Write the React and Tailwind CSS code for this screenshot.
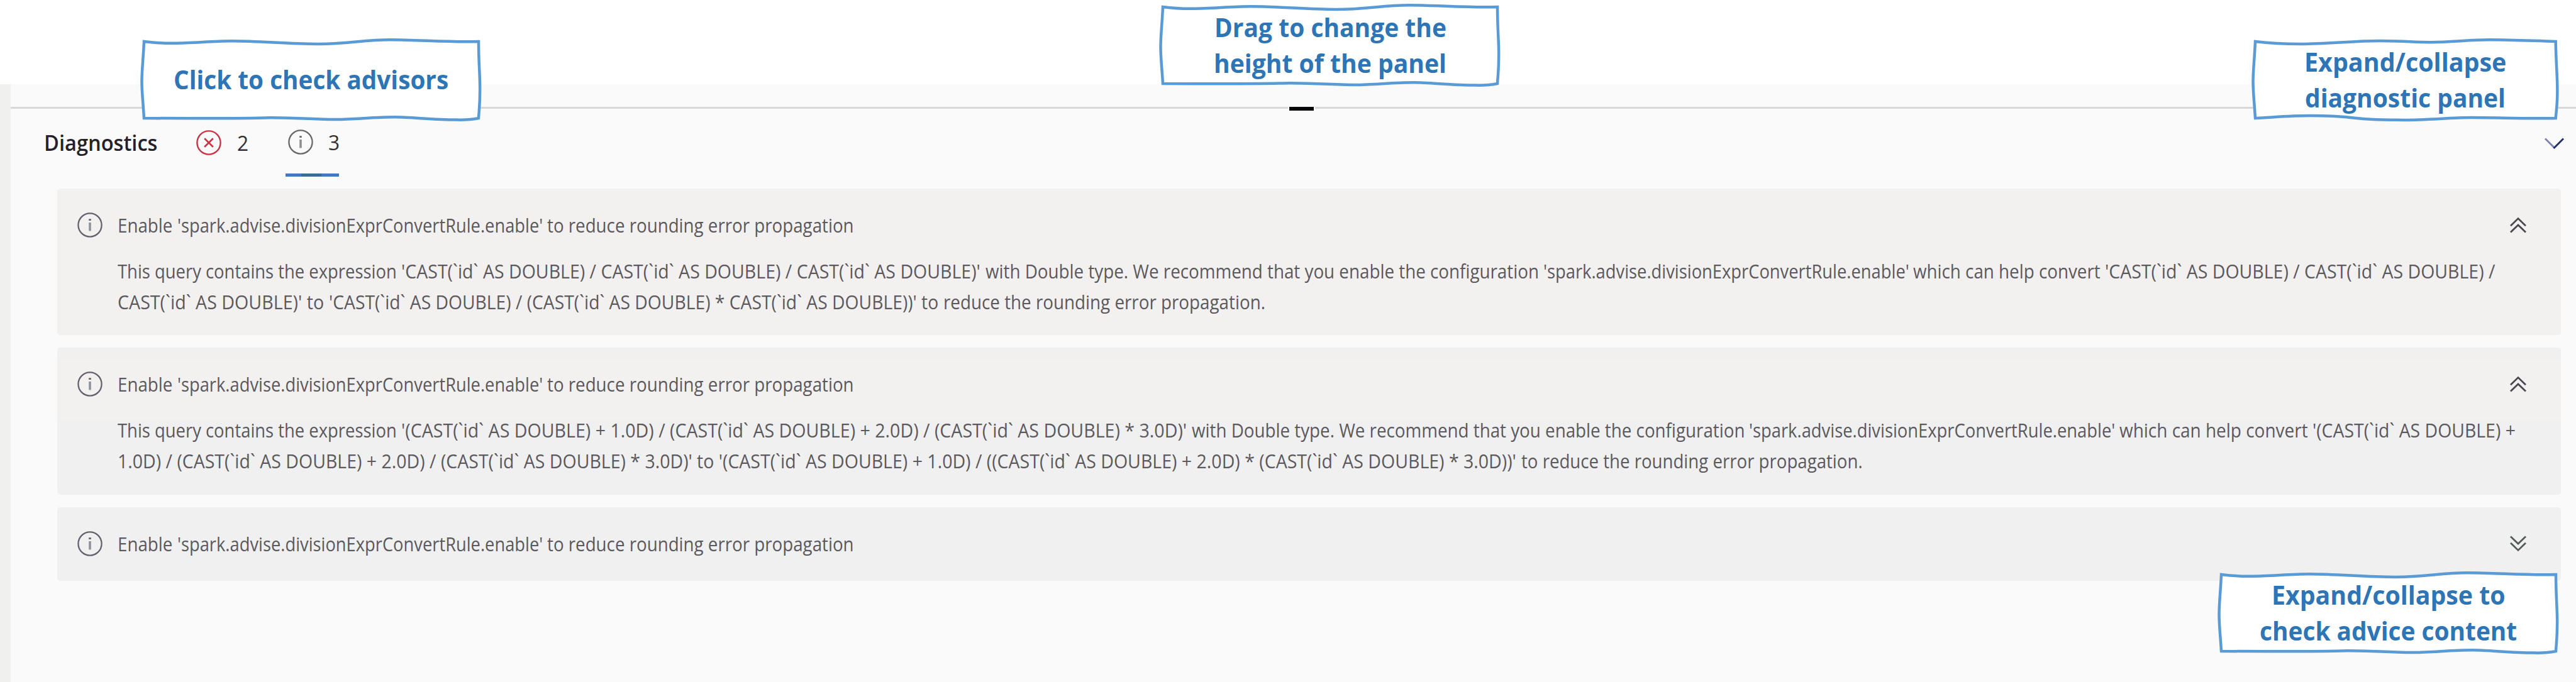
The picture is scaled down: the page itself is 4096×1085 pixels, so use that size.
import { useLayoutEffect, useRef, useState } from "react";

function FitText({ width, children, className = "" }) {
  const ref = useRef(null);
  const [ratio, setRatio] = useState(1);
  useLayoutEffect(() => {
    setRatio(width / ref.current.offsetWidth);
  }, [width, children]);
  return (
    <span className="block shrink-0 overflow-visible whitespace-nowrap" style={{ width }}>
      <span
        ref={ref}
        className={"inline-block origin-left whitespace-pre align-top " + className}
        style={{ transform: `scaleX(${ratio})` }}
      >
        {children}
      </span>
    </span>
  );
}

function TextLine({ runs }) {
  return (
    <p className="flex">
      {runs.map(([width, text]) => (
        <FitText key={text} width={width}>
          {text}
        </FitText>
      ))}
    </p>
  );
}

function InfoIcon({ color = "#685f6e", stem = "#8d939b" }) {
  return (
    <svg className="size-[40px] shrink-0" viewBox="0 0 40 40" fill="none">
      <circle cx="20" cy="20" r="18.6" stroke={color} strokeWidth="2.3" />
      <rect x="18.2" y="10.2" width="3.6" height="2.8" fill={color} />
      <rect x="18.2" y="16" width="3.6" height="13.4" fill={stem} />
    </svg>
  );
}

function ErrorIcon() {
  return (
    <svg className="size-[40px] shrink-0" viewBox="0 0 40 40" fill="none" stroke="#c63446">
      <circle cx="20" cy="20" r="18.6" strokeWidth="2.4" />
      <path d="M13.2 13.2 26.8 26.8M26.8 13.2 13.2 26.8" strokeWidth="2.7" />
    </svg>
  );
}

function DoubleChevron({ open }) {
  return (
    <svg
      className={open ? "h-[26px] w-[28px]" : "h-[26px] w-[28px] rotate-180"}
      viewBox="0 0 28 26"
      fill="none"
      stroke={open ? "#4b4650" : "#535b59"}
      strokeWidth="2.8"
    >
      <path d="M2 14.2 14 2.6 26 14.2M2 24.6 14 13 26 24.6" />
    </svg>
  );
}

const TITLE = [
  [94.5, "Enable "],
  [588, "'spark.advise.divisionExprConvertRule.enable' "],
  [488, "to reduce rounding error propagation"],
];

function Advice({ open, lines = [], className }) {
  return (
    <section className={"rounded-[5px] pt-[38px] pl-[32px] font-['Open_Sans',sans-serif] text-[30.5px] text-[#5b595d] " + className}>
      <div className="flex h-[40px] items-center pr-[54px]">
        <InfoIcon />
        <div className="ml-[24px] grow leading-[40px]">
          <TextLine runs={TITLE} />
        </div>
        <DoubleChevron open={open} />
      </div>
      {open && (
        <div className="mt-[29px] ml-[64px] leading-[48.7px]">
          {lines.map((runs, i) => (
            <TextLine key={i} runs={runs} />
          ))}
        </div>
      )}
    </section>
  );
}

const WAVE =
  "M0 0C16 2 32 3 47 2.8C78 2.8 108 -.7 140 -.7C185 -.7 228 4 275 4C322 4 350 -2.8 391 -2.8C440 -2.8 480 1.5 532 0C532 40 535 60 534 84C534 100 532.5 112 532 122C520 124.5 508 125 496 124.6C460 124.6 425 120.3 399 120.3C365 120.3 335 124 306 124C270 124 235 121 200 121.2C150 122.8 110 122.6 0 122C-2 90 -3.5 80 -3.5 64C-3.5 45 -1 25 0 0Z";
const WAVE_NARROW =
  "M0 0C24 3 48 4 73 4C115 4 155 -.9 198 -.9C235 -.9 255 1.4 280 1.2C312 1.2 340 -2.7 372 -2.7C410 -2.7 440 -1 477.7 0C478.3 40 481 60 480.3 84C480.3 100 478.5 112 477.7 122C440 123.2 385 121.1 344 121.1C310 121.1 275 124.9 237 124.9C195 124.9 175 124 151 121C135 119 110 118 87 118C55 118 30 120.5 0 122C-2 90 -3.5 80 -3.5 64C-3.5 45 -1 25 0 0Z";

function Callout({ className, lines, width = 532, path = WAVE }) {
  return (
    <div className={"absolute flex h-[122px] flex-col items-center justify-center " + className}>
      <svg className="absolute inset-0 size-full overflow-visible" viewBox={`0 0 ${width} 122`} preserveAspectRatio="none">
        <path d={path} fill="#fff" stroke="#5b9bd5" strokeWidth="4.5" />
      </svg>
      <div className="relative flex flex-col items-center font-['Open_Sans',sans-serif] text-[41.3px] leading-[57.1px] font-bold text-[#2e75b6]">
        {lines.map((line) => (
          <FitText key={line.text} width={line.width}>
            {line.text}
          </FitText>
        ))}
      </div>
    </div>
  );
}

export default function App() {
  return (
    <div className="relative flex h-[1085px] w-[4096px] flex-col overflow-hidden bg-white">
      <div className="h-[134px] shrink-0" />
      <div className="flex grow">
        <div className="w-[17px] shrink-0 bg-[#f0f0ee]" />
        <main className="grow bg-[#fafafa] pt-[36px]">
          <div className="relative h-[3px] bg-[#d6d7d7]">
            <div className="absolute top-0 left-[2031px] h-[6px] w-[43px] bg-[#fafafa] px-[2px]">
              <div className="h-full bg-[#08070c]" />
            </div>
          </div>

          <div className="flex h-[108px] pl-[52.5px] font-['Open_Sans',sans-serif] text-[33.5px] leading-[40px] text-[#323130]">
            <h2 className="flex items-center pb-px font-semibold text-[#25212b]">
              <FitText width={180}>Diagnostics</FitText>
            </h2>
            <div className="ml-[62px] flex items-center gap-[25px] pb-px">
              <ErrorIcon />
              <FitText width={18}>2</FitText>
            </div>
            <div className="ml-[59px] flex w-[85px] flex-col">
              <div className="flex grow items-center gap-[24px] pt-[4px] pl-[4px]">
                <InfoIcon color="#66686a" stem="#8f8f8f" />
                <FitText width={18}>3</FitText>
              </div>
              <div className="flex h-[5.5px] justify-center bg-[#4178be]">
                <div className="ml-[-2px] w-[32px] bg-[#356d98]" />
              </div>
            </div>
            <div className="flex grow items-center justify-end pt-px pr-[18px]">
              <svg className="h-[20px] w-[33px]" viewBox="0 0 33 20" fill="none" strokeWidth="2.8">
                <path d="M2 2.5 16.5 17" stroke="#7b80b6" />
                <path d="M15.5 18 31 2.5" stroke="#1f2f66" />
              </svg>
            </div>
          </div>

          <div className="flex flex-col gap-[20px] pt-[19px] pr-[24px] pl-[74px]">
            <Advice
              open
              className="h-[233.3px] bg-[#f2f1f0]"
              lines={[
                [
                  [451, "This query contains the expression "],
                  [928.5, "'CAST(`id` AS DOUBLE) / CAST(`id` AS DOUBLE) / CAST(`id` AS DOUBLE)' "],
                  [887, "with Double type. We recommend that you enable the configuration "],
                  [588.5, "'spark.advise.divisionExprConvertRule.enable' "],
                  [305, "which can help convert "],
                  [620, "'CAST(`id` AS DOUBLE) / CAST(`id` AS DOUBLE) /"],
                ],
                [
                  [336, "CAST(`id` AS DOUBLE)' to "],
                  [977, "'CAST(`id` AS DOUBLE) / (CAST(`id` AS DOUBLE) * CAST(`id` AS DOUBLE))' to "],
                  [512, "reduce the rounding error propagation."],
                ],
              ]}
            />
            <Advice
              open
              className="h-[233.3px] bg-[linear-gradient(#f0f0f0_18px,#f2f1ef_18px,#f2f1ef_116px,#f0f0f0_116px)]"
              lines={[
                [
                  [451, "This query contains the expression "],
                  [1256.5, "'(CAST(`id` AS DOUBLE) + 1.0D) / (CAST(`id` AS DOUBLE) + 2.0D) / (CAST(`id` AS DOUBLE) * 3.0D)' "],
                  [886.5, "with Double type. We recommend that you enable the configuration "],
                  [589, "'spark.advise.divisionExprConvertRule.enable' "],
                  [307, "which can help convert "],
                  [323, "'(CAST(`id` AS DOUBLE) +"],
                ],
                [
                  [921, "1.0D) / (CAST(`id` AS DOUBLE) + 2.0D) / (CAST(`id` AS DOUBLE) * 3.0D)' "],
                  [1310.5, "to '(CAST(`id` AS DOUBLE) + 1.0D) / ((CAST(`id` AS DOUBLE) + 2.0D) * (CAST(`id` AS DOUBLE) * 3.0D))' "],
                  [542.5, "to reduce the rounding error propagation."],
                ],
              ]}
            />
            <Advice open={false} className="h-[117px] bg-[#f0f0f0]" />
          </div>
        </main>
      </div>

      <Callout className="top-[66px] left-[228.7px] w-[532px]" lines={[{ text: "Click to check advisors", width: 437 }]} />
      <Callout
        className="top-[11px] left-[1849.3px] w-[532px]"
        lines={[
          { text: "Drag to change the", width: 369 },
          { text: "height of the panel", width: 370 },
        ]}
      />
      <Callout
        className="top-[66px] left-[3585.7px] w-[477.7px]"
        width={477.7}
        path={WAVE_NARROW}
        lines={[
          { text: "Expand/collapse", width: 321 },
          { text: "diagnostic panel", width: 319 },
        ]}
      />
      <Callout
        className="top-[914px] left-[3531.5px] w-[532px]"
        lines={[
          { text: "Expand/collapse to", width: 372 },
          { text: "check advice content", width: 409 },
        ]}
      />
    </div>
  );
}
